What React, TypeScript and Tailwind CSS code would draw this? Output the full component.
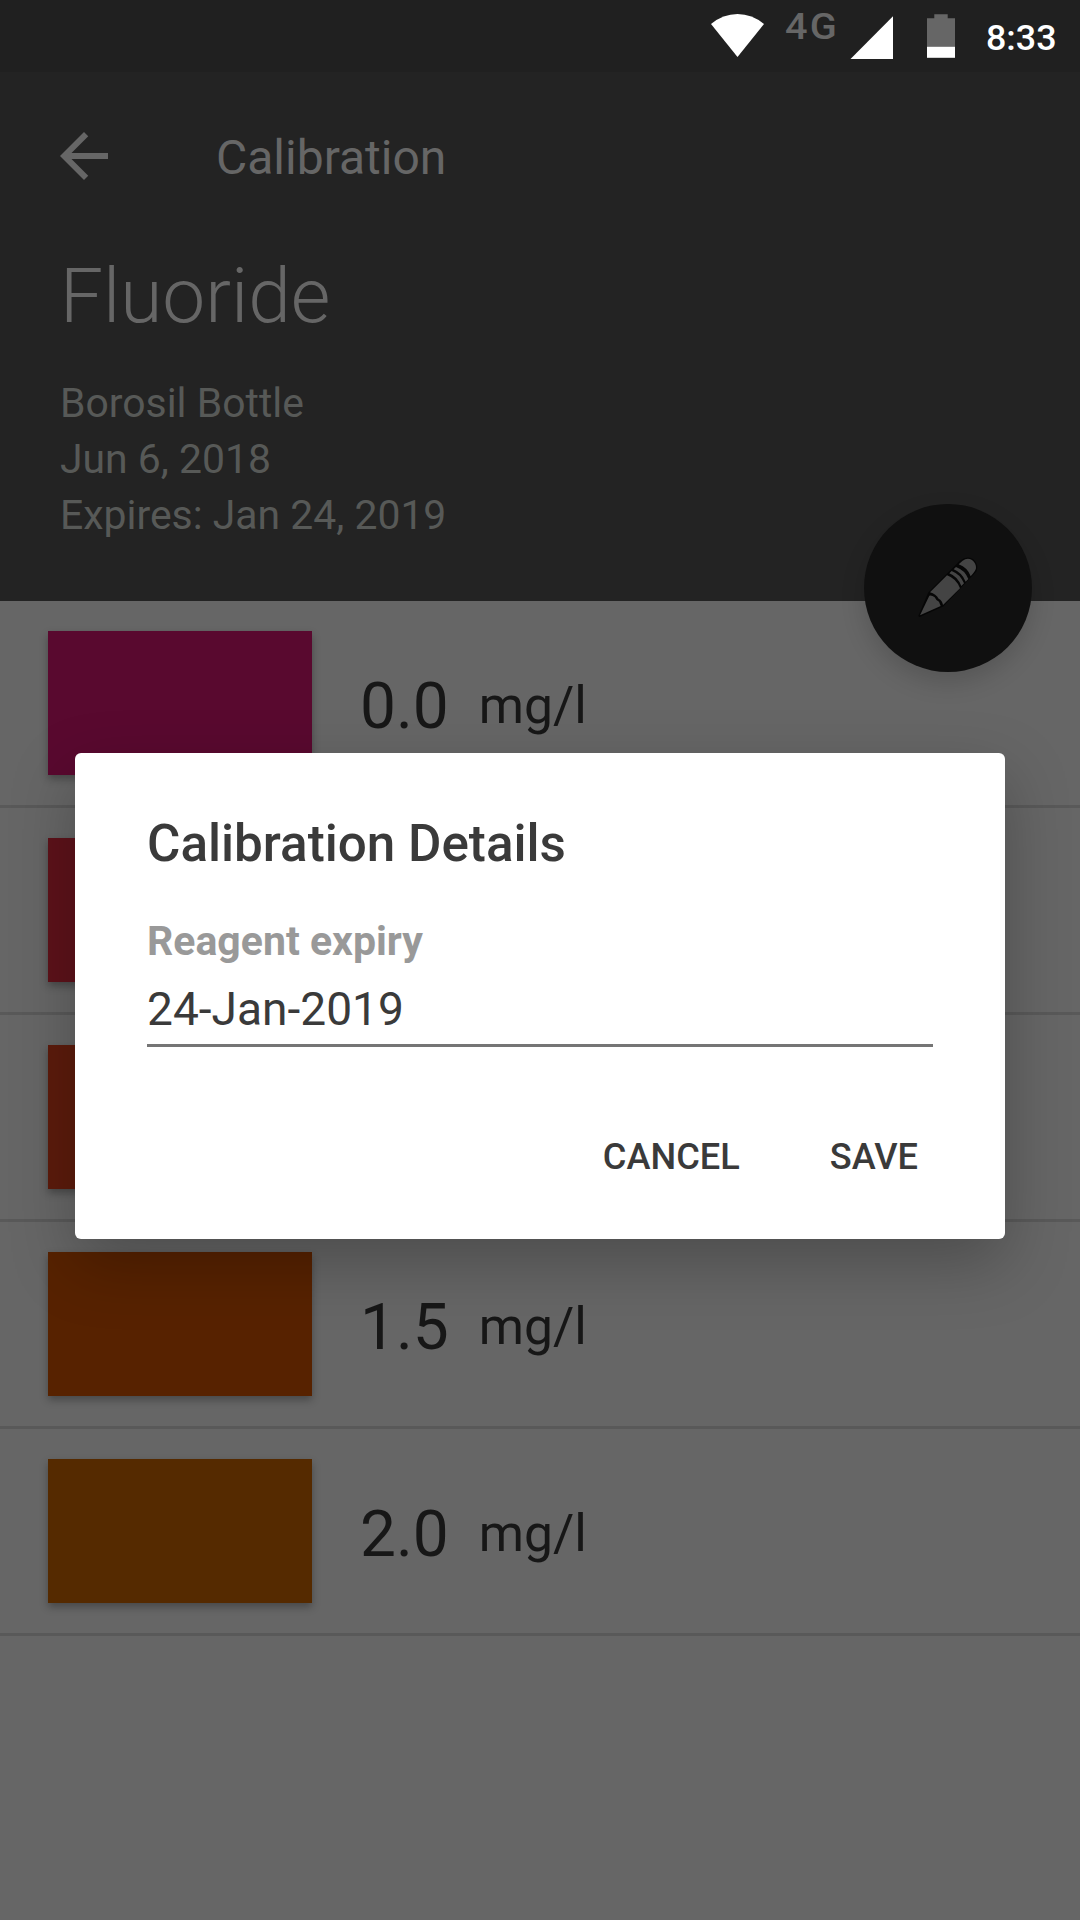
type Reading = { id: number; value?: string; swatch: string };

const readings: Reading[] = [
  { id: 0, value: '0.0', swatch: 'bg-[#59092f]' },
  { id: 1, swatch: 'bg-[#5d121a]' },
  { id: 2, swatch: 'bg-[#5c1b0c]' },
  { id: 3, value: '1.5', swatch: 'bg-[#572200]' },
  { id: 4, value: '2.0', swatch: 'bg-[#552a00]' },
];

function StatusBar() {
  return (
    <div className="flex h-[72px] items-start bg-[#202020] pl-[711px] text-white">
      <svg className="h-[72px] w-[54px] shrink-0" viewBox="0 0 54 72" fill="currentColor">
        <path d="M26.5 57 L0 24 Q12 14 26.5 14 Q41 14 53 24 Z" />
      </svg>
      <span className="ml-[20px] w-[65px] shrink-0 origin-left scale-x-[1.06] text-[37.5px] leading-[52px] font-medium tracking-[2px] text-[#666]">
        4G
      </span>
      <svg className="h-[72px] w-[44px] shrink-0" viewBox="0 0 44 72" fill="currentColor">
        <path d="M.5 59 L43 16.3 V59 Z" />
      </svg>
      <svg className="ml-[33px] h-[72px] w-[28px] shrink-0" viewBox="0 0 28 72" fill="#666">
        <path d="M7.3 14.2 H20.7 V18.3 H28 V47 H0 V18.3 H7.3 Z" />
        <path d="M0 46.8 H28 V57.8 H0 Z" fill="#fff" />
      </svg>
      <span className="ml-[31px] text-[35.8px] leading-[77px] font-medium">8:33</span>
    </div>
  );
}

function PencilIcon() {
  return (
    <svg
      className="size-[76px]"
      viewBox="0 0 228 228"
      fill="#444"
      stroke="#060606"
      strokeWidth="7"
      strokeLinejoin="round"
    >
      <path
        fill="#060606"
        d="M29 197 L58 129 L152 35 Q172 20 188 31 Q204 46 196 63 L98 166 Z"
      />
      <g stroke="none">
        <path d="M30 196 L58 137 Q67 136 74 142 Q78 152 87 155 L92 168 Z" />
        <path d="M60 127 L111 76 Q139 86 150 115 L99 165 Q97 151 86 146 Q78 132 60 127 Z" />
        <path d="M118 70 L125 63 Q150 72 162 100 L154 108 Q143 80 118 70 Z" />
        <path d="M131 58 L138 51 Q164 60 175 87 L167 95 Q156 68 131 58 Z" />
        <path d="M146 43 L158 32 Q172 22 186 30 Q199 40 198 55 Q196 64 182 79 Q173 53 146 43 Z" />
      </g>
    </svg>
  );
}

function Header() {
  return (
    <header className="relative h-[529px] bg-[#232323] text-[#666]">
      <div className="flex h-[168px] items-center pl-[48px]">
        <svg className="size-[72px]" viewBox="0 0 24 24" fill="currentColor">
          <path d="M20 11H7.83l5.59-5.59L12 4l-8 8 8 8 1.41-1.41L7.83 13H20v-2z" />
        </svg>
        <h1 className="ml-[96px] pt-[4px] text-[48px] leading-[60px]">Calibration</h1>
      </div>
      <div className="px-[60px]">
        <h2 className="mt-[11px] text-[76.6px] leading-[90px] font-light">Fluoride</h2>
        <div className="mt-[34px] text-[40.9px] leading-[56px] text-[#575957]">
          <p>Borosil Bottle</p>
          <p>Jun 6, 2018</p>
          <p>Expires: Jan 24, 2019</p>
        </div>
      </div>
      <button className="absolute right-[48px] -bottom-[71px] flex size-[168px] items-center justify-center rounded-full bg-[#101010] shadow-[0_10px_24px_rgba(0,0,0,0.16)]">
        <PencilIcon />
      </button>
    </header>
  );
}

function ReadingList() {
  return (
    <ul>
      {readings.map((r) => (
        <li key={r.id} className="flex h-[207px] items-start border-b-[3px] border-[#595959] pl-[48px] text-[#171717]">
          <div className={`mt-[30px] h-[144px] w-[264px] shadow-[0_4px_8px_rgba(0,0,0,0.3)] ${r.swatch}`} />
          {r.value && (
            <>
              <span className="mt-[68px] ml-[48px] text-[64px] leading-[76px]">{r.value}</span>
              <span className="mt-[75px] ml-[30px] text-[51.6px] leading-[60px]">mg/l</span>
            </>
          )}
        </li>
      ))}
    </ul>
  );
}

function CalibrationDialog() {
  return (
    <div className="absolute top-[753px] left-[75px] h-[486px] w-[930px] rounded-[6px] bg-white px-[72px] pt-[61px] text-[#3a3a3a] shadow-[0_24px_64px_rgba(0,0,0,0.25)]">
      <h3 className="text-[51.2px] leading-[60px] font-medium">Calibration Details</h3>
      <div className="mt-[43px] text-[41px] leading-[48px] font-bold text-[#999]">Reagent expiry</div>
      <div className="mt-[14px] border-b-[3px] border-[#757575] pb-[5px] text-[46.1px] leading-[60px]">24-Jan-2019</div>
      <div className="mt-[86px] flex justify-end gap-[90px] pr-[15px] text-[36.2px] leading-[48px] font-medium">
        <button>CANCEL</button>
        <button>SAVE</button>
      </div>
    </div>
  );
}

export default function App() {
  return (
    <div className="relative h-[1920px] w-[1080px] overflow-hidden bg-[#666] font-['Roboto',sans-serif]">
      <StatusBar />
      <Header />
      <ReadingList />
      <CalibrationDialog />
    </div>
  );
}
